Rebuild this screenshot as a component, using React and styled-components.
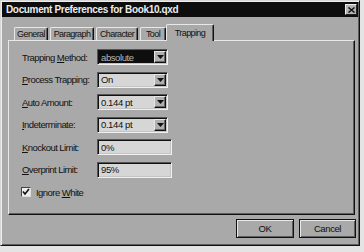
import React from 'react';
import styled, { createGlobalStyle } from 'styled-components';

const Global = createGlobalStyle`
  html, body { margin: 0; padding: 0; background: #e4e4e4; }
  body {
    width: 364px; height: 252px; overflow: hidden;
    font-family: "Liberation Sans", Arial, sans-serif;
  }
`;

const Window = styled.div`
  width: 360px;
  height: 246px;
  box-sizing: border-box;
  background: #a9a9a9;
  border: 1px solid;
  border-color: #d6d6d6 #111 #111 #d6d6d6;
  box-shadow: inset 1px 1px 0 #eeeeee, inset -1px -1px 0 #5e5e5e;
  padding: 1px 1px 2px 1px;
  display: flex;
  flex-direction: column;
`;

const TitleBar = styled.div`
  height: 15px;
  background: #0d0d0d;
  display: flex;
  align-items: center;
  justify-content: space-between;
  padding: 0 1px 0 4px;
`;

const Title = styled.span`
  color: #ececec;
  font-size: 10px;
  font-weight: bold;
  letter-spacing: -0.35px;
  white-space: nowrap;
`;

const CloseBtn = styled.div`
  width: 12px;
  height: 11px;
  box-sizing: border-box;
  background: #b4b4b4;
  border: 1px solid;
  border-color: #eee #222 #222 #eee;
  display: flex;
  align-items: center;
  justify-content: center;
`;

const TabRow = styled.div`
  display: flex;
  align-items: flex-end;
  height: 17px;
  margin-top: 6px;
  padding-left: 12px;
  position: relative;
  z-index: 2;
`;

const Tab = styled.div`
  box-sizing: border-box;
  width: ${p => p.$w + (p.$active ? 4 : 0)}px;
  height: ${p => (p.$active ? 17 : 13)}px;
  margin: 0 ${p => (p.$active ? 0 : 2)}px 0 ${p => (p.$active ? -2 : 0)}px;
  background: #a9a9a9;
  border: 1px solid;
  border-bottom: none;
  border-color: #e8e8e8 #111 #111 #e8e8e8;
  border-radius: 2px 2px 0 0;
  box-shadow: inset -1px 0 0 #5e5e5e;
  display: flex;
  align-items: ${p => (p.$active ? 'flex-start' : 'center')};
  padding-top: ${p => (p.$active ? 3 : 0)}px;
  justify-content: center;
  font-size: 9px;
  letter-spacing: -0.6px;
  color: #111;
  white-space: nowrap;
  overflow: hidden;
  margin-bottom: ${p => (p.$active ? -1 : 0)}px;
`;

const Panel = styled.div`
  margin: 0 3px 0 6px;
  height: 175px;
  box-sizing: border-box;
  border: 1px solid;
  border-color: #e8e8e8 #111 #111 #e8e8e8;
  box-shadow: inset -1px -1px 0 #5e5e5e;
  padding: 8px 0 0 13px;
  display: grid;
  grid-template-columns: 75px auto;
  grid-auto-rows: 16px;
  row-gap: 6.5px;
  align-items: center;
  justify-items: start;
  align-content: start;
`;

const Label = styled.div`
  font-size: 9.5px;
  letter-spacing: -0.55px;
  color: #111;
  white-space: nowrap;
`;

const Sunken = styled.div`
  box-sizing: border-box;
  width: ${p => p.$w}px;
  height: 16px;
  border: 1px solid;
  border-color: #555 #f0f0f0 #f0f0f0 #555;
  box-shadow: inset 1px 1px 0 #111, inset -1px -1px 0 #c4c4c4;
  background: ${p => (p.$selected ? '#0e0e0e' : '#d6d6d6')};
  display: flex;
  align-items: center;
  padding: 0 1px 0 3px;
  font-size: 9.5px;
  letter-spacing: -0.4px;
  color: ${p => (p.$selected ? '#b8b8b8' : '#111')};
`;

const Value = styled.span`
  flex: 1;
  white-space: nowrap;
`;

const ArrowBtn = styled.div`
  box-sizing: border-box;
  width: 12px;
  height: 12px;
  background: #b0b0b0;
  border: 1px solid;
  border-color: #e6e6e6 #111 #111 #e6e6e6;
  box-shadow: inset -1px -1px 0 #666;
  display: flex;
  align-items: center;
  justify-content: center;
`;

const CheckRow = styled.label`
  grid-column: 1 / span 2;
  display: flex;
  align-items: center;
  gap: 5px;
  margin-left: -1px;
`;

const CheckBox = styled.div`
  box-sizing: border-box;
  width: 10px;
  height: 10px;
  background: #eeeeee;
  border: 1px solid;
  border-color: #444 #ddd #ddd #444;
  display: flex;
  align-items: center;
  justify-content: center;
`;

const ButtonRow = styled.div`
  display: flex;
  justify-content: flex-end;
  gap: 5px;
  margin: 4px 2px 0 0;
`;

const Button = styled.div`
  box-sizing: border-box;
  width: ${p => p.$w}px;
  height: 19px;
  background: #a9a9a9;
  border: 1px solid #111;
  box-shadow: inset 1px 1px 0 #e8e8e8, inset -1px -1px 0 #5e5e5e;
  display: flex;
  align-items: center;
  justify-content: center;
  font-size: 9.5px;
  letter-spacing: -0.4px;
  color: #111;
`;

const Arrow = () => (
  <svg width="7" height="4" viewBox="0 0 7 4">
    <polygon points="0,0 7,0 3.5,4" fill="#111" />
  </svg>
);

const Dropdown = ({ value, selected }) => (
  <Sunken $w={71} $selected={selected}>
    <Value>{value}</Value>
    <ArrowBtn><Arrow /></ArrowBtn>
  </Sunken>
);

const rows = [
  { pre: 'Trapping ', key: 'M', post: 'ethod:', value: 'absolute', type: 'drop', selected: true },
  { pre: '', key: 'P', post: 'rocess Trapping:', value: 'On', type: 'drop' },
  { pre: '', key: 'A', post: 'uto Amount:', value: '0.144 pt', type: 'drop' },
  { pre: '', key: 'I', post: 'ndeterminate:', value: '0.144 pt', type: 'drop' },
  { pre: '', key: 'K', post: 'nockout Limit:', value: '0%', type: 'text' },
  { pre: '', key: 'O', post: 'verprint Limit:', value: '95%', type: 'text' },
];

const tabs = [
  { name: 'General', w: 34 },
  { name: 'Paragraph', w: 44 },
  { name: 'Character', w: 42 },
  { name: 'Tool', w: 26 },
  { name: 'Trapping', w: 44, active: true },
];

export default function App() {
  return (
    <>
      <Global />
      <Window>
        <TitleBar>
          <Title>Document Preferences for Book10.qxd</Title>
          <CloseBtn>
            <svg width="7" height="6" viewBox="0 0 7 6">
              <path d="M0.5 0.5 L6.5 5.5 M6.5 0.5 L0.5 5.5" stroke="#111" strokeWidth="1.5" />
            </svg>
          </CloseBtn>
        </TitleBar>
        <TabRow>
          {tabs.map(t => (
            <Tab key={t.name} $w={t.w} $active={t.active}>{t.name}</Tab>
          ))}
        </TabRow>
        <Panel>
          {rows.map(r => (
            <React.Fragment key={r.post}>
              <Label>{r.pre}<u>{r.key}</u>{r.post}</Label>
              {r.type === 'drop'
                ? <Dropdown value={r.value} selected={r.selected} />
                : <Sunken $w={75}><Value>{r.value}</Value></Sunken>}
            </React.Fragment>
          ))}
          <CheckRow>
            <CheckBox>
              <svg width="8" height="8" viewBox="0 0 8 8">
                <polyline points="1,3.5 3,6 7,1" fill="none" stroke="#111" strokeWidth="1.6" />
              </svg>
            </CheckBox>
            <Label>Ignore <u>W</u>hite</Label>
          </CheckRow>
        </Panel>
        <ButtonRow>
          <Button $w={58}>OK</Button>
          <Button $w={57}>Cancel</Button>
        </ButtonRow>
      </Window>
    </>
  );
}
